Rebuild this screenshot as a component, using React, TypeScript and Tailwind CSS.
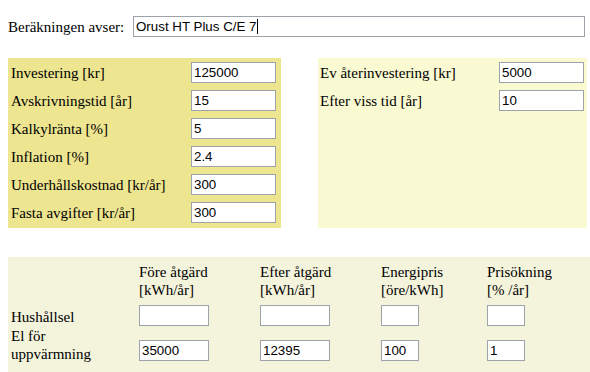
import React from 'react';

const inputCls =
  "h-[21px] border border-[#9da3aa] bg-white px-[2px] text-[13.33px] text-black outline-none font-['Liberation_Sans',Arial,sans-serif]";

const leftRows: [string, string][] = [
  ['Investering [kr]', '125000'],
  ['Avskrivningstid [år]', '15'],
  ['Kalkylränta [%]', '5'],
  ['Inflation [%]', '2.4'],
  ['Underhållskostnad [kr/år]', '300'],
  ['Fasta avgifter [kr/år]', '300'],
];

const rightRows: [string, string][] = [
  ['Ev återinvestering [kr]', '5000'],
  ['Efter viss tid [år]', '10'],
];

function Field({ label, value, labelW }: { label: string; value: string; labelW: string }) {
  return (
    <div className="flex h-[21px] items-center">
      <span className={`${labelW} whitespace-nowrap`}>{label}</span>
      <input className={`${inputCls} w-[85px]`} defaultValue={value} />
    </div>
  );
}

export default function App() {
  return (
    <div className="min-h-[372px] w-[590px] bg-white font-['Liberation_Serif','Times_New_Roman',serif] text-[15px] leading-[18px] text-black">
      <div className="flex items-center pl-[8px] pt-[16px]">
        <span className="w-[125px]">Beräkningen avser:</span>
        <div className="relative">
          <input
            className={`${inputCls} w-[452px] border-[#7f8895] bg-[#fcfeff]`}
            defaultValue="Orust HT Plus C/E 7"
          />
          <span className="absolute left-[124px] top-[3px] h-[15px] w-px bg-black" />
        </div>
      </div>

      <div className="mt-[21px] flex pl-[8px]">
        <div className="flex h-[170px] w-[273px] flex-col gap-[7px] bg-[#ede590] pl-[3px] pt-[4px]">
          {leftRows.map(([l, v]) => (
            <Field key={l} label={l} value={v} labelW="w-[180px]" />
          ))}
        </div>
        <div className="ml-[37px] flex h-[170px] w-[269px] flex-col gap-[7px] bg-[#fafad2] pl-[2px] pt-[4px]">
          {rightRows.map(([l, v]) => (
            <Field key={l} label={l} value={v} labelW="w-[179px]" />
          ))}
        </div>
      </div>

      <div className="ml-[8px] mt-[29px] h-[115px] bg-[#f4f3dc] pl-[3px] pt-[6px]">
        <div className="grid grid-cols-[128px_121px_121px_106px_1fr]">
          <div />
          <div>Före åtgärd<br />[kWh/år]</div>
          <div>Efter åtgärd<br />[kWh/år]</div>
          <div>Energipris<br />[öre/kWh]</div>
          <div>Prisökning<br />[% /år]</div>

          <div className="mt-[6px] flex h-[21px] items-end">Hushållsel</div>
          <input className={`${inputCls} mt-[6px] w-[70px]`} />
          <input className={`${inputCls} mt-[6px] w-[70px]`} />
          <input className={`${inputCls} mt-[6px] w-[38px]`} />
          <input className={`${inputCls} mt-[6px] w-[38px]`} />

          <div className="mt-[1px]">El för<br />uppvärmning</div>
          <input className={`${inputCls} mt-[14px] w-[70px]`} defaultValue="35000" />
          <input className={`${inputCls} mt-[14px] w-[70px]`} defaultValue="12395" />
          <input className={`${inputCls} mt-[14px] w-[38px]`} defaultValue="100" />
          <input className={`${inputCls} mt-[14px] w-[38px]`} defaultValue="1" />
        </div>
      </div>
    </div>
  );
}
